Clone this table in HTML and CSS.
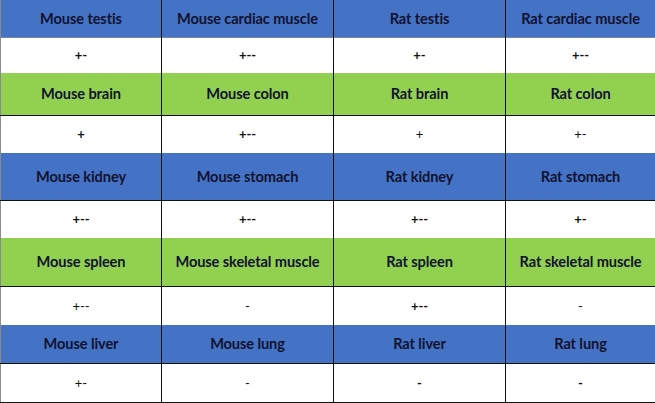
FILE: index.html
```html
<!DOCTYPE html>
<html>
<head>
<meta charset="utf-8">
<link rel="stylesheet" href="styles.css">
</head>
<body>
<table class="grid">
  <colgroup>
    <col class="c1"><col class="c2"><col class="c3"><col class="c4">
  </colgroup>
  <tr class="hd blue first h37">
    <td class="vl">Mouse testis</td><td class="vl">Mouse cardiac muscle</td><td class="vl">Rat testis</td><td>Rat cardiac muscle</td>
  </tr>
  <tr class="val h36">
    <td class="vl b">+-</td><td class="vl b">+--</td><td class="vl b">+-</td><td class="b">+--</td>
  </tr>
  <tr class="hd green h42">
    <td class="vl">Mouse brain</td><td class="vl">Mouse colon</td><td class="vl">Rat brain</td><td>Rat colon</td>
  </tr>
  <tr class="val h38">
    <td class="vl b">+</td><td class="vl b">+--</td><td class="vl">+</td><td>+-</td>
  </tr>
  <tr class="hd blue h47">
    <td class="vl">Mouse kidney</td><td class="vl">Mouse stomach</td><td class="vl">Rat kidney</td><td>Rat stomach</td>
  </tr>
  <tr class="val h38">
    <td class="vl b">+--</td><td class="vl b">+--</td><td class="vl b">+--</td><td class="b">+-</td>
  </tr>
  <tr class="hd green h48">
    <td class="vl">Mouse spleen</td><td class="vl">Mouse skeletal muscle</td><td class="vl">Rat spleen</td><td>Rat skeletal muscle</td>
  </tr>
  <tr class="val h39">
    <td class="vl">+--</td><td class="vl">-</td><td class="vl b">+--</td><td>-</td>
  </tr>
  <tr class="hd blue h38">
    <td class="vl">Mouse liver</td><td class="vl">Mouse lung</td><td class="vl">Rat liver</td><td>Rat lung</td>
  </tr>
  <tr class="val h39 last">
    <td class="vl">+-</td><td class="vl">-</td><td class="vl b">-</td><td class="b">-</td>
  </tr>
</table>
</body>
</html>
```
FILE: styles.css
```css
html, body {
  margin: 0;
  padding: 0;
  background: #ffffff;
}
.grid {
  border-collapse: collapse;
  table-layout: fixed;
  width: 655px;
  border-left: 1px solid #8a8a8a;
  border-right: 1px solid #111;
  font-family: "Lato", "Liberation Sans", sans-serif;
}
.c1 { width: 161px; }
.c2 { width: 172px; }
.c3 { width: 172px; }
.c4 { width: 150px; }
.grid td {
  padding: 0;
  text-align: center;
  vertical-align: middle;
}
.grid td.vl {
  border-right: 1px solid #111;
}
.hd td {
  font-weight: 700;
  font-size: 14.6px;
  color: #121230;
  letter-spacing: -0.1px;
}
.blue td { background: #4472c4; }
.green td { background: #92d050; }
.hd {
  border-bottom: 1px solid #111;
}
.hd.first {
  border-bottom: 1px solid #6f86a8;
}
.val td {
  font-size: 13px;
  color: #111;
  font-weight: 400;
}
.val td.b {
  font-weight: 700;
}
.last {
  border-bottom: 1px solid #111;
}
.h36 { height: 36px; }
.h37 { height: 37px; }
.h38 { height: 38px; }
.h39 { height: 39px; }
.h42 { height: 42px; }
.h47 { height: 47px; }
.h48 { height: 48px; }
```
